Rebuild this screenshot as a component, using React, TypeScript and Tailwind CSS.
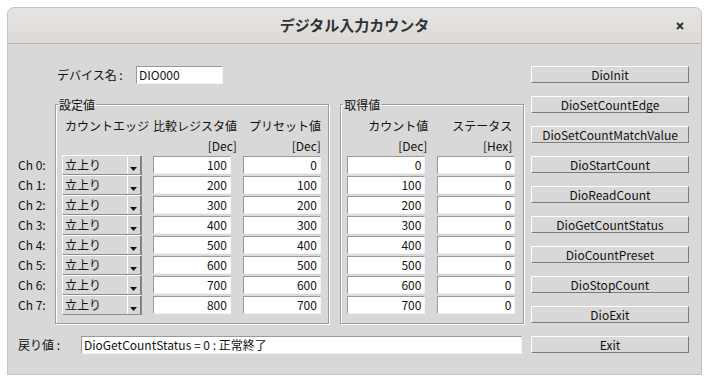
import React from "react";

const rows = [0, 1, 2, 3, 4, 5, 6, 7].map((i) => ({
  ch: `Ch ${i}:`,
  cmp: String((i + 1) * 100),
  pre: String(i * 100),
  cnt: String(i * 100),
  st: "0",
}));

const buttons = [
  "DioInit",
  "DioSetCountEdge",
  "DioSetCountMatchValue",
  "DioStartCount",
  "DioReadCount",
  "DioGetCountStatus",
  "DioCountPreset",
  "DioStopCount",
  "DioExit",
  "Exit",
];

const Field: React.FC<{ value: string; className?: string; right?: boolean }> = ({
  value,
  className = "",
  right,
}) => (
  <div
    className={`flex h-[18px] items-center border-t border-l border-t-[#9a9a9a] border-l-[#9a9a9a] border-b border-r border-b-[#f4f4f4] border-r-[#f4f4f4] bg-white leading-none ${
      right ? "justify-end pr-[3px]" : "pl-[2px]"
    } ${className}`}
  >
    {value}
  </div>
);

const Combo: React.FC = () => (
  <div className="flex h-[20px] w-[80px] border-t border-l border-white border-b border-r border-b-[#8c8c8c] border-r-[#8c8c8c]">
    <div className="flex flex-1 items-center pl-[2px] leading-none">立上り</div>
    <div className="flex w-[14px] flex-col items-center justify-end border-l border-white border-r border-r-[#7a7a7a] pb-[3px]">
      <svg width="7" height="4" viewBox="0 0 7 4">
        <path d="M0 0h7L3.5 4z" fill="#111" />
      </svg>
    </div>
  </div>
);

const Legend: React.FC<{ text: string }> = ({ text }) => (
  <legend className="ml-[2px] px-px text-[12px] leading-[15px]">{text}</legend>
);

export default function App() {
  return (
    <div className="h-[385px] w-[710px] bg-white pl-[7px] pt-[7px] font-[family-name:'Noto_Sans_CJK_JP',sans-serif] text-[12px] text-[#111]">
      <div className="flex h-[368px] w-[695px] flex-col overflow-hidden rounded-t-[7px] border border-[#c4c4c4] bg-[#d8d8d8]">
        {/* title bar */}
        <div className="flex h-[36px] shrink-0 items-center border-b border-[#b6b3ae] bg-gradient-to-b from-[#e6e4e1] to-[#dddad6]">
          <div className="w-[40px]" />
          <div className="flex-1 text-center text-[15px] font-bold text-[#2e3436]">
            デジタル入力カウンタ
          </div>
          <div className="flex w-[40px] justify-center pr-[3px]">
            <svg width="8" height="8" viewBox="0 0 8 8">
              <path d="M1 1l6 6M7 1L1 7" stroke="#2e3436" strokeWidth="2" />
            </svg>
          </div>
        </div>

        {/* body */}
        <div className="flex flex-1">
          <div className="w-[516px]">
            <div className="mt-[22px] flex h-[18px] items-center pl-[49px]">
              <span className="w-[79px]">デバイス名 :</span>
              <Field value="DIO000" className="w-[87px]" />
            </div>

            <div className="mt-[13px] flex pl-[10px]">
              <div className="w-[37px] pt-[58px]">
                {rows.map((r) => (
                  <div key={r.ch} className="flex h-[20px] items-center">
                    {r.ch}
                  </div>
                ))}
              </div>

              <fieldset className="w-[275px] border border-[#9d9d9d] pb-[8px] shadow-[inset_1px_1px_0_#fff,1px_1px_0_#fff]">
                <Legend text="設定値" />
                <div className="mt-[4px] flex h-[20px] items-center pl-[6px]">
                  <span className="w-[91px] pl-[3px]">カウントエッジ</span>
                  <span className="w-[84px] text-right">比較レジスタ値</span>
                  <span className="w-[84px] text-right">プリセット値</span>
                </div>
                <div className="flex h-[19px] items-center pl-[97px]">
                  <span className="w-[84px] text-right">[Dec]</span>
                  <span className="w-[84px] text-right">[Dec]</span>
                </div>
                {rows.map((r) => (
                  <div key={r.ch} className="flex h-[20px] items-start pl-[6px]">
                    <Combo />
                    <Field value={r.cmp} right className="ml-[11px] mt-px w-[78px]" />
                    <Field value={r.pre} right className="ml-[12px] mt-px w-[78px]" />
                  </div>
                ))}
              </fieldset>

              <fieldset className="ml-[11px] w-[184px] border border-[#9d9d9d] pb-[8px] shadow-[inset_1px_1px_0_#fff,1px_1px_0_#fff]">
                <Legend text="取得値" />
                <div className="mt-[4px] flex h-[20px] items-center pl-[6px]">
                  <span className="w-[81px] text-right">カウント値</span>
                  <span className="w-[84px] text-right">ステータス</span>
                </div>
                <div className="flex h-[19px] items-center pl-[6px]">
                  <span className="w-[80px] text-right">[Dec]</span>
                  <span className="w-[85px] text-right">[Hex]</span>
                </div>
                {rows.map((r) => (
                  <div key={r.ch} className="flex h-[20px] items-start pl-[6px]">
                    <Field value={r.cnt} right className="mt-px w-[78px]" />
                    <Field value={r.st} right className="ml-[12px] mt-px w-[78px]" />
                  </div>
                ))}
              </fieldset>
            </div>

            <div className="mt-[12px] flex h-[18px] items-center pl-[10px]">
              <span className="w-[63px]">戻り値 :</span>
              <Field value="DioGetCountStatus = 0 : 正常終了" className="w-[441px]" />
            </div>
          </div>

          <div className="ml-[7px] mt-[22px] flex w-[158px] flex-col gap-[13px]">
            {buttons.map((b) => (
              <button
                key={b}
                className="flex h-[17px] items-center justify-center border-t border-l border-white border-b border-r border-b-[#7c7c7c] border-r-[#7c7c7c] leading-none"
              >
                {b}
              </button>
            ))}
          </div>
        </div>
      </div>
    </div>
  );
}
